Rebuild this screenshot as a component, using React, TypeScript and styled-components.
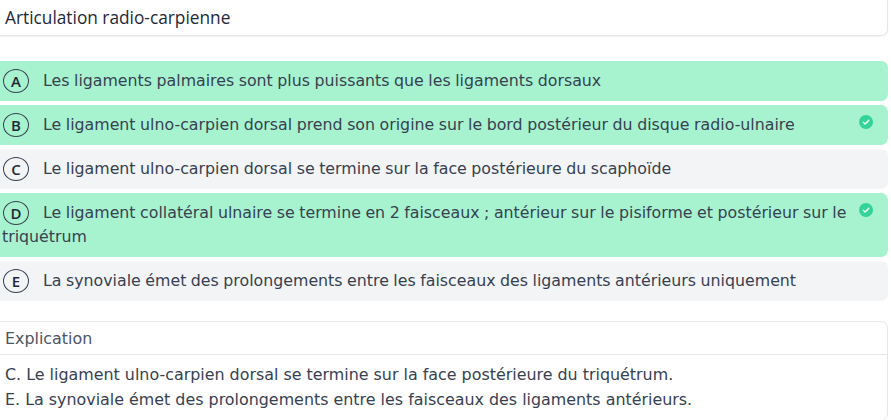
import React from "react";
import styled, { createGlobalStyle } from "styled-components";

const GlobalStyle = createGlobalStyle`
  html, body {
    margin: 0;
    padding: 0;
    background: #fff;
    overflow: hidden;
  }
`;

const Page = styled.div`
  margin: -6px 3px 0 -6px;
  font-family: "DejaVu Sans", "Noto Sans", sans-serif;
  color: #374151;
`;

const TitleCard = styled.div`
  height: 42px;
  box-sizing: border-box;
  padding: 6px 10px 0;
  display: flex;
  align-items: center;
  background: #fff;
  border: 1px solid #e5e7eb;
  border-top: none;
  border-radius: 0 0 7px 7px;
  box-shadow: 0 1px 2px rgba(0, 0, 0, 0.06);
  font-family: "Open Sans", sans-serif;
  font-size: 17.3px;
  font-weight: 500;
  color: #1f2937;
`;

const Options = styled.div`
  margin-top: 25px;
  display: flex;
  flex-direction: column;
  gap: 4px;
`;

const Row = styled.div<{ $correct: boolean }>`
  position: relative;
  padding: 8px 22px 8px 8px;
  border-radius: 7px;
  background: ${(p) => (p.$correct ? "#a7f3d0" : "#f3f4f6")};
  font-size: 15.8px;
  word-spacing: -0.5px;
  line-height: 24px;
`;

const Badge = styled.span`
  display: inline-flex;
  align-items: center;
  justify-content: center;
  box-sizing: border-box;
  width: 26px;
  height: 24px;
  margin: 0 14px 0 1px;
  vertical-align: top;
  border: 1px solid #374151;
  border-radius: 50%;
  font-family: "Open Sans", sans-serif;
  font-size: 15px;
  font-weight: 600;
  line-height: 1;
  color: #1f2937;
`;

const Check = styled.svg`
  position: absolute;
  right: 15px;
  top: 10px;
`;

const Explanation = styled.div`
  margin-top: 20px;
  border: 1px solid #e5e7eb;
  border-radius: 7px;
  font-size: 15.9px;
  color: #4b5563;
`;

const ExplanationHead = styled.div`
  height: 32px;
  padding: 0 10px;
  display: flex;
  align-items: center;
  border-bottom: 1px solid #e5e7eb;
`;

const ExplanationBody = styled.div`
  padding: 7px 10px 8px;
  line-height: 25px;
  color: #374151;
`;

const CheckIcon = () => (
  <Check width="14" height="14" viewBox="0 0 14 14">
    <circle cx="7" cy="7" r="7" fill="#34d399" />
    <path d="M4.2 7.2 L6.1 9 L9.8 5.2" fill="none" stroke="#fff" strokeWidth="1.4" strokeLinecap="round" strokeLinejoin="round" />
  </Check>
);

const options = [
  { letter: "A", text: "Les ligaments palmaires sont plus puissants que les ligaments dorsaux", correct: true, mark: false },
  { letter: "B", text: "Le ligament ulno-carpien dorsal prend son origine sur le bord postérieur du disque radio-ulnaire", correct: true, mark: true },
  { letter: "C", text: "Le ligament ulno-carpien dorsal se termine sur la face postérieure du scaphoïde", correct: false, mark: false },
  { letter: "D", text: "Le ligament collatéral ulnaire se termine en 2 faisceaux ; antérieur sur le pisiforme et postérieur sur le triquétrum", correct: true, mark: true },
  { letter: "E", text: "La synoviale émet des prolongements entre les faisceaux des ligaments antérieurs uniquement", correct: false, mark: false },
];

export default function App() {
  return (
    <>
      <GlobalStyle />
      <Page>
        <TitleCard>Articulation radio-carpienne</TitleCard>
        <Options>
          {options.map((o) => (
            <Row key={o.letter} $correct={o.correct}>
              <Badge>{o.letter}</Badge>
              {o.text}
              {o.mark && <CheckIcon />}
            </Row>
          ))}
        </Options>
        <Explanation>
          <ExplanationHead>Explication</ExplanationHead>
          <ExplanationBody>
            C. Le ligament ulno-carpien dorsal se termine sur la face postérieure du triquétrum.
            <br />
            E. La synoviale émet des prolongements entre les faisceaux des ligaments antérieurs.
          </ExplanationBody>
        </Explanation>
      </Page>
    </>
  );
}
